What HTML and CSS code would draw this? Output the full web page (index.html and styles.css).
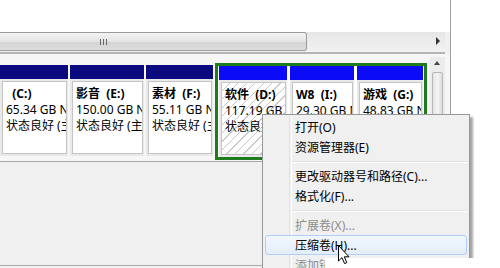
FILE: index.html
```html
<!DOCTYPE html>
<html lang="zh-CN">
<head>
    <meta charset="UTF-8">
    <meta name="viewport" content="width=device-width, initial-scale=1.0">
    <title>磁盘管理</title>
    <link rel="stylesheet" href="styles.css">
</head>
<body>
    <div class="screen">
        <div class="window">
            <div class="top-pane"></div>

            <!-- 가로 스크롤바 -->
            <div class="hscroll">
                <div class="h-thumb"><span class="grip"></span></div>
                <div class="h-track"></div>
                <div class="h-arrow"></div>
            </div>

            <div class="disk-area">
                <div class="parts">
                    <div class="part p1">
                        <div class="part-head"></div>
                        <div class="part-body">
                            <div class="part-box">
                                <b>&nbsp;&nbsp;(C:)</b>
                                <span>65.34 GB NTFS</span>
                                <span>状态良好 (主分区)</span>
                            </div>
                        </div>
                    </div>
                    <div class="part p2">
                        <div class="part-head"></div>
                        <div class="part-body">
                            <div class="part-box">
                                <b>影音&nbsp;&nbsp;(E:)</b>
                                <span>150.00 GB NTFS</span>
                                <span>状态良好 (主分区)</span>
                            </div>
                        </div>
                    </div>
                    <div class="part p3">
                        <div class="part-head"></div>
                        <div class="part-body">
                            <div class="part-box">
                                <b>素材&nbsp;&nbsp;(F:)</b>
                                <span>55.11 GB NTFS</span>
                                <span>状态良好 (主分区)</span>
                            </div>
                        </div>
                    </div>

                    <!-- 확장 파티션 (초록 테두리) -->
                    <div class="extended">
                        <div class="part logical d">
                            <div class="part-head"></div>
                            <div class="part-body">
                                <div class="part-box hatched">
                                    <b>软件&nbsp;&nbsp;(D:)</b>
                                    <span>117.19 GB NTFS</span>
                                    <span>状态良好 (逻辑驱动器)</span>
                                </div>
                            </div>
                        </div>
                        <div class="part logical i">
                            <div class="part-head"></div>
                            <div class="part-body">
                                <div class="part-box">
                                    <b>W8&nbsp;&nbsp;(I:)</b>
                                    <span>29.30 GB NTFS</span>
                                    <span>状态良好 (逻辑驱动器)</span>
                                </div>
                            </div>
                        </div>
                        <div class="part logical g">
                            <div class="part-head"></div>
                            <div class="part-body">
                                <div class="part-box">
                                    <b>游戏&nbsp;&nbsp;(G:)</b>
                                    <span>48.83 GB NTFS</span>
                                    <span>状态良好 (逻辑驱动器)</span>
                                </div>
                            </div>
                        </div>
                    </div>
                </div>

                <div class="vscroll">
                    <div class="v-arrow"></div>
                    <div class="v-thumb"></div>
                </div>
            </div>

            <div class="lower"></div>
        </div>

        <!-- 우클릭 메뉴 -->
        <ul class="menu">
            <li class="item">打开(O)</li>
            <li class="item">资源管理器(E)</li>
            <li class="sep"></li>
            <li class="item">更改驱动器号和路径(C)...</li>
            <li class="item">格式化(F)...</li>
            <li class="sep"></li>
            <li class="item disabled">扩展卷(X)...</li>
            <li class="item hover">压缩卷(H)...</li>
            <li class="item disabled">添加镜像(A)...</li>
        </ul>

        <div class="tooltip"></div>

        <svg class="cursor" width="13" height="20" viewBox="0 0 13 20">
            <path d="M0.5 0.5 L0.5 16 L4 12.6 L6.6 18.6 L8.8 17.6 L6.3 11.8 L11 11.8 Z" fill="#fff" stroke="#000" stroke-width="1"/>
        </svg>
    </div>
</body>
</html>
```

FILE: styles.css
```css
* {
    box-sizing: border-box;
}

body {
    margin: 0;
    background-color: #fff;
    font-family: "Noto Sans", "Noto Sans CJK SC", sans-serif;
    font-size: 12px;
    color: #000;
}

.screen {
    position: relative;
    width: 500px;
    height: 268px;
    overflow: hidden;
}

.window {
    width: 451px;
    height: 268px;
    border-right: 1px solid #a0a0a0;
    background-color: #f0f0f0;
}

.top-pane {
    height: 32px;
    background-color: #fff;
}

/* 가로 스크롤바 */
.hscroll {
    display: flex;
    width: 445px;
    height: 22px;
    border-bottom: 2px solid #b4b4b4;
    background: linear-gradient(#e6e6e6, #f2f2f2);
}

.h-thumb {
    width: 307px;
    height: 19px;
    margin-top: 0;
    border: 1px solid #9c9c9c;
    border-left: none;
    border-radius: 0 3px 3px 0;
    background: linear-gradient(#f4f4f4, #e4e4e4 50%, #d4d4d4 51%, #dcdcdc);
}

.grip {
    display: block;
    width: 7px;
    height: 6px;
    margin: 6px 0 0 100px;
    background: repeating-linear-gradient(90deg, #666 0 1px, transparent 1px 3px);
}

.h-track {
    flex: 1;
}

.h-arrow {
    width: 14px;
    position: relative;
}

.h-arrow::after {
    content: "";
    position: absolute;
    left: 5px;
    top: 5px;
    border-left: 4px solid #333;
    border-top: 4px solid transparent;
    border-bottom: 4px solid transparent;
}

/* 디스크 영역 */
.disk-area {
    display: flex;
    height: 108px;
    padding-top: 9px;
    background-color: #f6f6f6;
    border-bottom: 1px solid #a9a9a9;
}

.parts {
    display: flex;
    align-items: flex-start;
    width: 428px;
}

.part {
    margin-right: 2px;
    margin-top: 2px;
}

.p1 { width: 68px; }
.p2 { width: 74px; }
.p3 { width: 67px; }

.part-head {
    height: 14px;
    background-color: #0a0a7e;
}

.part-body {
    height: 77px;
    padding: 2px 1px 2px 2px;
    background-color: #e9e9e9;
}

.part-box {
    display: flex;
    flex-direction: column;
    height: 100%;
    padding: 4px 0 0 3px;
    border: 1px solid #c4c4c4;
    background-color: #fff;
    line-height: 16px;
    white-space: nowrap;
    overflow: hidden;
}

.part-box b {
    font-weight: bold;
}

.hatched {
    background: repeating-linear-gradient(135deg, #fff 0 5px, #c9c9c9 5px 6px);
}

.extended {
    display: flex;
    width: 212px;
    padding: 0 1px 0 1px;
    border: 3px solid #1e7b1e;
    background-color: #fff;
}

.extended .part {
    margin-top: 0;
    margin-right: 3px;
}

.extended .part:last-child {
    margin-right: 0;
}

.logical .part-head {
    background-color: #0b0bf5;
}

.d { width: 68px; }
.i { width: 64px; }
.g { width: 66px; }

/* 세로 스크롤바 */
.vscroll {
    width: 15px;
    margin-left: 2px;
    margin-top: -6px;
    background-color: #ececec;
}

.v-arrow {
    position: relative;
    height: 13px;
}

.v-arrow::after {
    content: "";
    position: absolute;
    left: 4px;
    top: 4px;
    border-bottom: 4px solid #444;
    border-left: 3px solid transparent;
    border-right: 3px solid transparent;
}

.v-thumb {
    height: 100px;
    margin: 2px 2px 0 2px;
    border: 1px solid #b8b8b8;
    border-radius: 2px;
    background: linear-gradient(90deg, #e4e4e4, #f4f4f4 50%, #dcdcdc);
}

.lower {
    height: 104px;
    border-bottom: 1px solid #a9a9a9;
}

/* 컨텍스트 메뉴 */
.menu {
    position: absolute;
    left: 262px;
    top: 114px;
    width: 208px;
    margin: 0;
    padding: 2px;
    list-style: none;
    border: 1px solid #979797;
    background-color: #f0f0f0;
    box-shadow: 3px 3px 2px rgba(0, 0, 0, 0.35);
    font-family: "Noto Sans", "Noto Sans CJK SC", sans-serif;
    font-size: 12px;
}

.menu::before {
    content: "";
    position: absolute;
    left: 26px;
    top: 2px;
    bottom: 2px;
    width: 1px;
    border-left: 1px solid #e2e3e3;
    border-right: 1px solid #fff;
}

.item {
    position: relative;
    height: 20px;
    line-height: 20px;
    padding-left: 29px;
    border: 1px solid transparent;
    border-radius: 3px;
}

.sep {
    height: 9px;
    margin-left: 27px;
    background: linear-gradient(transparent 4px, #e0e0e0 4px 5px, #fff 5px 6px, transparent 6px);
}

.disabled {
    color: #8d8d8d;
}

.hover {
    border-color: #aecff7;
    background: linear-gradient(#f2f7fe, #e3edfb);
}

.tooltip {
    position: absolute;
    left: 325px;
    top: 258px;
    width: 175px;
    height: 12px;
    background-color: #fff;
}

.cursor {
    position: absolute;
    left: 338px;
    top: 245px;
}
```
